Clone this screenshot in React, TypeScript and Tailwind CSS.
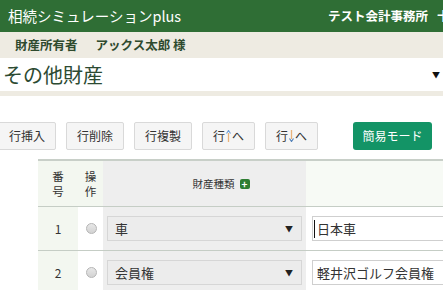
import React from "react";

const font = { fontFamily: '"Noto Sans CJK JP", "Noto Sans", sans-serif' };

function Btn({ children }: { children: React.ReactNode }) {
  return (
    <div className="h-[28px] px-[10px] flex items-center border border-[#d9d9d9] bg-[#f5f5f5] rounded-[2px] text-[12px] text-[#333] whitespace-nowrap">
      {children}
    </div>
  );
}

function Arrow({ up }: { up: boolean }) {
  return (
    <svg width="5" height="12" viewBox="0 0 5 12" className="mx-[1px]">
      {up ? (
        <>
          <line x1="2.5" y1="3" x2="2.5" y2="12" stroke="#e9b27a" strokeWidth="1.3" />
          <path d="M0.5 3.5 L2.5 0.5 L4.5 3.5" fill="none" stroke="#6f9fd6" strokeWidth="1.1" />
        </>
      ) : (
        <>
          <line x1="2.5" y1="0" x2="2.5" y2="9" stroke="#e9b27a" strokeWidth="1.3" />
          <path d="M0.5 8.5 L2.5 11.5 L4.5 8.5" fill="none" stroke="#4f7fb8" strokeWidth="1.1" />
        </>
      )}
    </svg>
  );
}

function Radio() {
  return (
    <div className="w-[11px] h-[11px] rounded-full border border-[#b5b5b5] bg-gradient-to-b from-[#e8e8e8] to-[#d2d2d2]" />
  );
}

function Row({ n, kind, name, caret }: { n: string; kind: string; name: string; caret?: boolean }) {
  return (
    <div className="grid grid-cols-[40px_25px_203px_1fr] h-[44px] border-b border-[#c5cdc5]">
      <div className="bg-[#f3f7f0] flex items-center justify-center text-[12px] text-[#333]">{n}</div>
      <div className="bg-white flex items-center justify-center pl-[1px]">
        <Radio />
      </div>
      <div className="bg-[#eeeeee] flex items-center pl-[4px] pr-[4px]">
        <div className="w-[195px] h-[25px] border border-[#d6d6d6] bg-[#ececec] flex items-center pl-[7px] pr-[8px] text-[13px] text-[#333]">
          <span>{kind}</span>
          <span className="ml-auto text-[8px] text-[#222]">▼</span>
        </div>
      </div>
      <div className="bg-white flex items-center pl-[6px]">
        <div className="relative h-[25px] flex-1 border border-[#cfcfcf] border-r-0 bg-white flex items-center pl-[4px] text-[13px] text-[#333] whitespace-nowrap">
          {caret && <div className="absolute left-[1px] top-[3px] w-[1px] h-[18px] bg-[#111]" />}
          {name}
        </div>
      </div>
    </div>
  );
}

export default function App() {
  return (
    <div className="w-[443px] h-[290px] overflow-hidden bg-white" style={font}>
      <div className="h-[32px] bg-[#2f6e35] flex items-center pl-[8px] overflow-hidden whitespace-nowrap">
        <span className="text-[14.5px] text-white">相続シミュレーションplus</span>
        <span className="ml-auto text-[12.5px] font-bold text-white">テスト会計事務所</span>
        <span className="ml-[9px] text-[12.5px] font-bold text-white shrink-0 w-[6px] overflow-hidden">十</span>
      </div>
      <div className="h-[26px] bg-[#eeebe2] flex items-center pl-[15px] text-[12.5px] font-bold text-[#2e4a2e] whitespace-nowrap">
        <span>財産所有者</span>
        <span className="ml-[18px]">アックス太郎 様</span>
      </div>
      <div className="h-[33px] bg-white flex items-center pl-[3px] pr-[3px]">
        <span className="text-[20px] text-[#2c4a32] leading-none">その他財産</span>
        <span className="ml-auto text-[8px] text-[#111]">▼</span>
      </div>
      <div className="h-[5px] bg-[#eeebe2]" />
      <div className="mt-[26px] flex items-center gap-[10px] -ml-[2px]">
        <Btn>行挿入</Btn>
        <Btn>行削除</Btn>
        <Btn>行複製</Btn>
        <Btn>
          行<Arrow up />へ
        </Btn>
        <Btn>
          行<Arrow up={false} />へ
        </Btn>
        <div className="ml-[25px] h-[28px] w-[79px] rounded-[3px] bg-[#139466] flex items-center justify-center text-[12px] text-white whitespace-nowrap">
          簡易モード
        </div>
      </div>
      <div className="mt-[9px] ml-[38px] border-t-2 border-[#c8cfc8]">
        <div className="grid grid-cols-[40px_25px_203px_1fr] h-[46px] border-b border-[#c5cdc5] text-[11.5px] text-[#333]">
          <div className="bg-[#f3f7f0] flex flex-col items-center justify-center leading-[15px]">
            <span>番</span>
            <span>号</span>
          </div>
          <div className="bg-[#f3f7f0] flex flex-col items-center justify-center leading-[15px]">
            <span>操</span>
            <span>作</span>
          </div>
          <div className="bg-[#eeeeee] flex items-center justify-center gap-[5px] pl-[33px]">
            <span className="text-[10.5px]">財産種類</span>
            <span className="w-[10px] h-[10px] rounded-[2px] bg-[#2e7d32] flex items-center justify-center text-white text-[10px] font-bold leading-none">+</span>
          </div>
          <div className="bg-[#f7faf5]" />
        </div>
        <Row n="1" kind="車" name="日本車" caret />
        <Row n="2" kind="会員権" name="軽井沢ゴルフ会員権" />
      </div>
    </div>
  );
}
